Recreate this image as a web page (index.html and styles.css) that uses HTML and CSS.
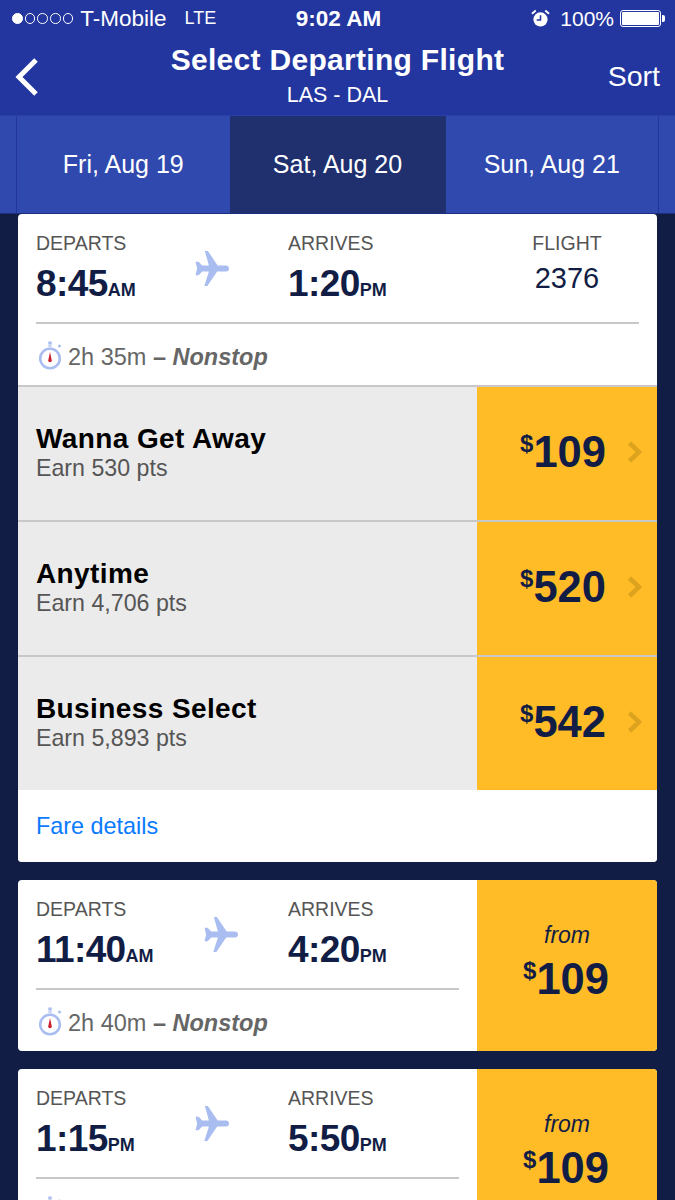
FILE: index.html
```html
<!DOCTYPE html>
<html lang="en">
<head>
<meta charset="utf-8">
<title>Select Departing Flight</title>
<link rel="stylesheet" href="styles.css">
</head>
<body>
<svg class="defs" width="0" height="0" aria-hidden="true">
  <symbol id="plane" viewBox="0 0 34 34">
    <path d="M10.500 0h3l9.500 14h8c2 0 3 1.300 3 3s-1 3-3 3h-8.500l-9.500 14h-3l4.500-14h-6.500l-3.500 3.500h-3l1.500-6.500-1.500-6.500h3l3.500 3.500h6.500z"/>
  </symbol>
  <symbol id="watch" viewBox="0 0 24 30">
    <circle cx="11" cy="17.500" r="9.800" fill="none" stroke="#a9bdf0" stroke-width="2.600"/>
    <rect x="9.300" y="0.500" width="3.400" height="3" fill="#a9bdf0"/>
    <rect x="9.300" y="3.500" width="3.400" height="3" fill="#c9d6f5"/>
    <circle cx="20.500" cy="5" r="1.500" fill="#a9bdf0"/>
    <path d="M11 11l1.800 8.500a1.800 1.800 0 1 1-3.600 0z" fill="#c8202f"/>
  </symbol>
  <symbol id="chev" viewBox="0 0 15 22">
    <path d="M2.500 2l9.500 9-9.500 9" fill="none" stroke="#dda31f" stroke-width="4.500"/>
  </symbol>
</svg>

<div class="page">
  <header class="header">
    <div class="status">
      <div class="status-left">
        <span class="signal"><i class="dot on"></i><i class="dot"></i><i class="dot"></i><i class="dot"></i><i class="dot"></i></span>
        <span>T-Mobile</span>
        <span class="lte">LTE</span>
      </div>
      <div class="clock">9:02 AM</div>
      <div class="status-right">
        <svg class="alarm" viewBox="0 0 20 20" width="19" height="19">
          <circle cx="10" cy="11" r="7.500" fill="#fff"/>
          <path d="M10 6.500v5h-4" fill="none" stroke="#23369f" stroke-width="1.600"/>
          <path d="M1 5l4-3.500M19 5l-4-3.500" stroke="#fff" stroke-width="2" fill="none"/>
        </svg>
        <span>100%</span>
        <span class="battery"><span class="battery-fill"></span></span>
      </div>
    </div>
    <nav class="nav">
      <svg class="back" viewBox="0 0 26 40" width="26" height="40">
        <path d="M23 3L6 20l17 17" fill="none" stroke="#fff" stroke-width="5"/>
      </svg>
      <div class="title-box">
        <div class="title">Select Departing Flight</div>
        <div class="subtitle">LAS - DAL</div>
      </div>
      <div class="sort">Sort</div>
    </nav>
  </header>

  <div class="tabs">
    <div class="tab">Fri, Aug 19</div>
    <div class="tab tab-active">Sat, Aug 20</div>
    <div class="tab">Sun, Aug 21</div>
  </div>

  <main class="list">
    <section class="card">
      <div class="info">
        <div class="route route-wide">
          <div class="left">
            <div class="col">
              <div class="label">DEPARTS</div>
              <div class="time">8:45<small>AM</small></div>
            </div>
            <div class="plane-cell"><svg class="plane"><use href="#plane"/></svg></div>
          </div>
          <div class="col">
            <div class="label">ARRIVES</div>
            <div class="time">1:20<small>PM</small></div>
          </div>
          <div class="col flight">
            <div class="label">FLIGHT</div>
            <div class="flight-no">2376</div>
          </div>
        </div>
        <div class="duration"><svg class="watch"><use href="#watch"/></svg><span>2h 35m <span class="dash">–</span> <b>Nonstop</b></span></div>
      </div>
      <div class="fare">
        <div class="fare-name"><div class="fare-title">Wanna Get Away</div><div class="fare-pts">Earn 530 pts</div></div>
        <div class="fare-price"><span class="price"><sup>$</sup>109</span><svg class="chev"><use href="#chev"/></svg></div>
      </div>
      <div class="fare">
        <div class="fare-name"><div class="fare-title">Anytime</div><div class="fare-pts">Earn 4,706 pts</div></div>
        <div class="fare-price"><span class="price"><sup>$</sup>520</span><svg class="chev"><use href="#chev"/></svg></div>
      </div>
      <div class="fare">
        <div class="fare-name"><div class="fare-title">Business Select</div><div class="fare-pts">Earn 5,893 pts</div></div>
        <div class="fare-price"><span class="price"><sup>$</sup>542</span><svg class="chev"><use href="#chev"/></svg></div>
      </div>
      <div class="fare-details">Fare details</div>
    </section>

    <section class="card card-row">
      <div class="info info-narrow">
        <div class="route">
          <div class="left">
            <div class="col">
              <div class="label">DEPARTS</div>
              <div class="time">11:40<small>AM</small></div>
            </div>
            <div class="plane-cell"><svg class="plane"><use href="#plane"/></svg></div>
          </div>
          <div class="col">
            <div class="label">ARRIVES</div>
            <div class="time">4:20<small>PM</small></div>
          </div>
        </div>
        <div class="duration"><svg class="watch"><use href="#watch"/></svg><span>2h 40m <span class="dash">–</span> <b>Nonstop</b></span></div>
      </div>
      <div class="from-box"><div class="from">from</div><div class="price"><sup>$</sup>109</div></div>
    </section>

    <section class="card card-row">
      <div class="info info-narrow">
        <div class="route">
          <div class="left">
            <div class="col">
              <div class="label">DEPARTS</div>
              <div class="time">1:15<small>PM</small></div>
            </div>
            <div class="plane-cell"><svg class="plane"><use href="#plane"/></svg></div>
          </div>
          <div class="col">
            <div class="label">ARRIVES</div>
            <div class="time">5:50<small>PM</small></div>
          </div>
        </div>
        <div class="duration"><svg class="watch"><use href="#watch"/></svg></div>
      </div>
      <div class="from-box"><div class="from">from</div><div class="price"><sup>$</sup>109</div></div>
    </section>
  </main>
</div>
</body>
</html>
```

FILE: styles.css
```css
* { box-sizing: border-box; }
html, body { margin: 0; padding: 0; }
body {
  width: 675px;
  height: 1200px;
  overflow: hidden;
  background: #121d45;
  font-family: "Liberation Sans", Arial, sans-serif;
}
.defs { display: block; height: 0; }
.page { height: 1200px; overflow: hidden; }

.header { background: #23369f; color: #fff; height: 115px; }
.status {
  display: grid;
  grid-template-columns: 1fr auto 1fr;
  align-items: center;
  height: 38px;
  padding: 0 10px 1px 12px;
  font-size: 21px;
}
.status-left { display: flex; align-items: center; font-size: 22.500px; }
.signal { display: flex; gap: 2.200px; margin-right: 7px; }
.dot { width: 10.500px; height: 10.500px; border-radius: 50%; border: 1px solid #fff; }
.dot.on { background: #fff; }
.lte { margin-left: 18px; font-size: 18px; }
.clock { font-weight: bold; font-size: 22.500px; }
.status-right { display: flex; align-items: center; justify-content: flex-end; gap: 8px; }
.alarm { margin-right: 2px; }
.battery {
  position: relative;
  width: 41px;
  height: 17px;
  border: 1px solid #fff;
  border-radius: 3px;
  padding: 1px;
  margin-left: -2px;
  margin-right: 4px;
}
.battery::after {
  content: "";
  position: absolute;
  right: -5px;
  top: 4px;
  width: 3px;
  height: 7px;
  background: #fff;
  border-radius: 0 2px 2px 0;
}
.battery-fill { display: block; height: 100%; background: #fff; border-radius: 1px; }

.nav {
  display: grid;
  grid-template-columns: 1fr auto 1fr;
  align-items: center;
  height: 77px;
  padding: 0 13px;
}
.title-box { text-align: center; padding-bottom: 4px; }
.title { font-size: 30px; font-weight: bold; line-height: 36px; letter-spacing: 0.300px; }
.subtitle { font-size: 21.500px; line-height: 24px; margin-top: 5px; }
.sort { font-size: 28.500px; text-align: right; margin-right: 2px; }

.tabs {
  display: flex;
  height: 99px;
  padding: 0 16px;
  background: #3049ae;
  border-bottom: 1px solid #1e2e7e;
  border-top: 1px solid #2a3fa5;
}
.tab {
  flex: 1 1 0;
  display: flex;
  align-items: center;
  justify-content: center;
  color: #fff;
  font-size: 25px;
  background: #3049ae;
}
.tabs .tab:first-child { border-left: 1px solid #23369f; }
.tabs .tab:last-child { border-right: 1px solid #23369f; }
.tabs .tab-active { flex: 0 0 216px; background: #20306f; }

.list { padding: 0 18px; display: flex; flex-direction: column; gap: 18px; }
.card { background: #fff; border-radius: 4px; overflow: hidden; }
.card-row { display: flex; height: 171px; flex: none; }

.info { padding: 18px 18px 0; height: 171px; }
.info-narrow { width: 459px; }
.route {
  display: grid;
  grid-template-columns: 252px 1fr;
  height: 92px;
  border-bottom: 2px solid #c8c8c8;
}
.route-wide { grid-template-columns: 252px 1fr 84px; }
.left { display: flex; }
.label { font-size: 19.500px; line-height: 23px; color: #555; }
.time { font-size: 37px; line-height: 44px; font-weight: bold; color: #121d45; margin-top: 7px; letter-spacing: -0.600px; }
.time small { font-size: 18px; letter-spacing: 0; }
.plane-cell { flex: 1; display: flex; justify-content: center; padding-top: 19px; }
.plane { width: 35px; height: 35px; fill: #a9bdf0; }
.flight { text-align: center; margin-left: -60px; white-space: nowrap; }
.flight-no { font-size: 29px; line-height: 44px; color: #121d45; margin-top: 1px; }
.duration {
  display: flex;
  align-items: center;
  gap: 5px;
  height: 61px;
  padding-left: 3px;
  padding-top: 6px;
  font-size: 23.500px;
  color: #666;
}
.duration b { font-style: italic; }
.dash { font-weight: bold; }
.watch { width: 24px; height: 30px; margin-bottom: 3px; flex: none; }

.fare { display: flex; height: 135px; border-top: 2px solid #c8c8c8; background: #ebebeb; }
.fare-name { flex: 1; padding: 35px 18px 0; }
.fare-title { font-size: 28px; line-height: 34px; font-weight: bold; color: #000; letter-spacing: 0.400px; }
.fare-pts { font-size: 23.200px; line-height: 25px; color: #555; }
.fare-price {
  width: 180px;
  display: flex;
  align-items: center;
  justify-content: flex-end;
  background: #ffbc26;
  padding: 0 15px 3px 0;
  gap: 21px;
}
.price { font-size: 43.500px; font-weight: bold; color: #121d45; line-height: 44px; }
.price sup { font-size: 24px; vertical-align: 15px; line-height: 0; }
.chev { width: 15px; height: 22px; }
.fare-details { height: 72px; display: flex; align-items: center; padding-left: 18px; font-size: 23.400px; color: #0a7aff; background: #fff; }

.from-box {
  width: 180px;
  background: #ffbc26;
  text-align: center;
  padding-top: 41px;
}
.from { font-size: 23px; font-style: italic; color: #121d45; line-height: 28px; }
.from-box .price { margin-top: 8px; padding-right: 2px; }
```
